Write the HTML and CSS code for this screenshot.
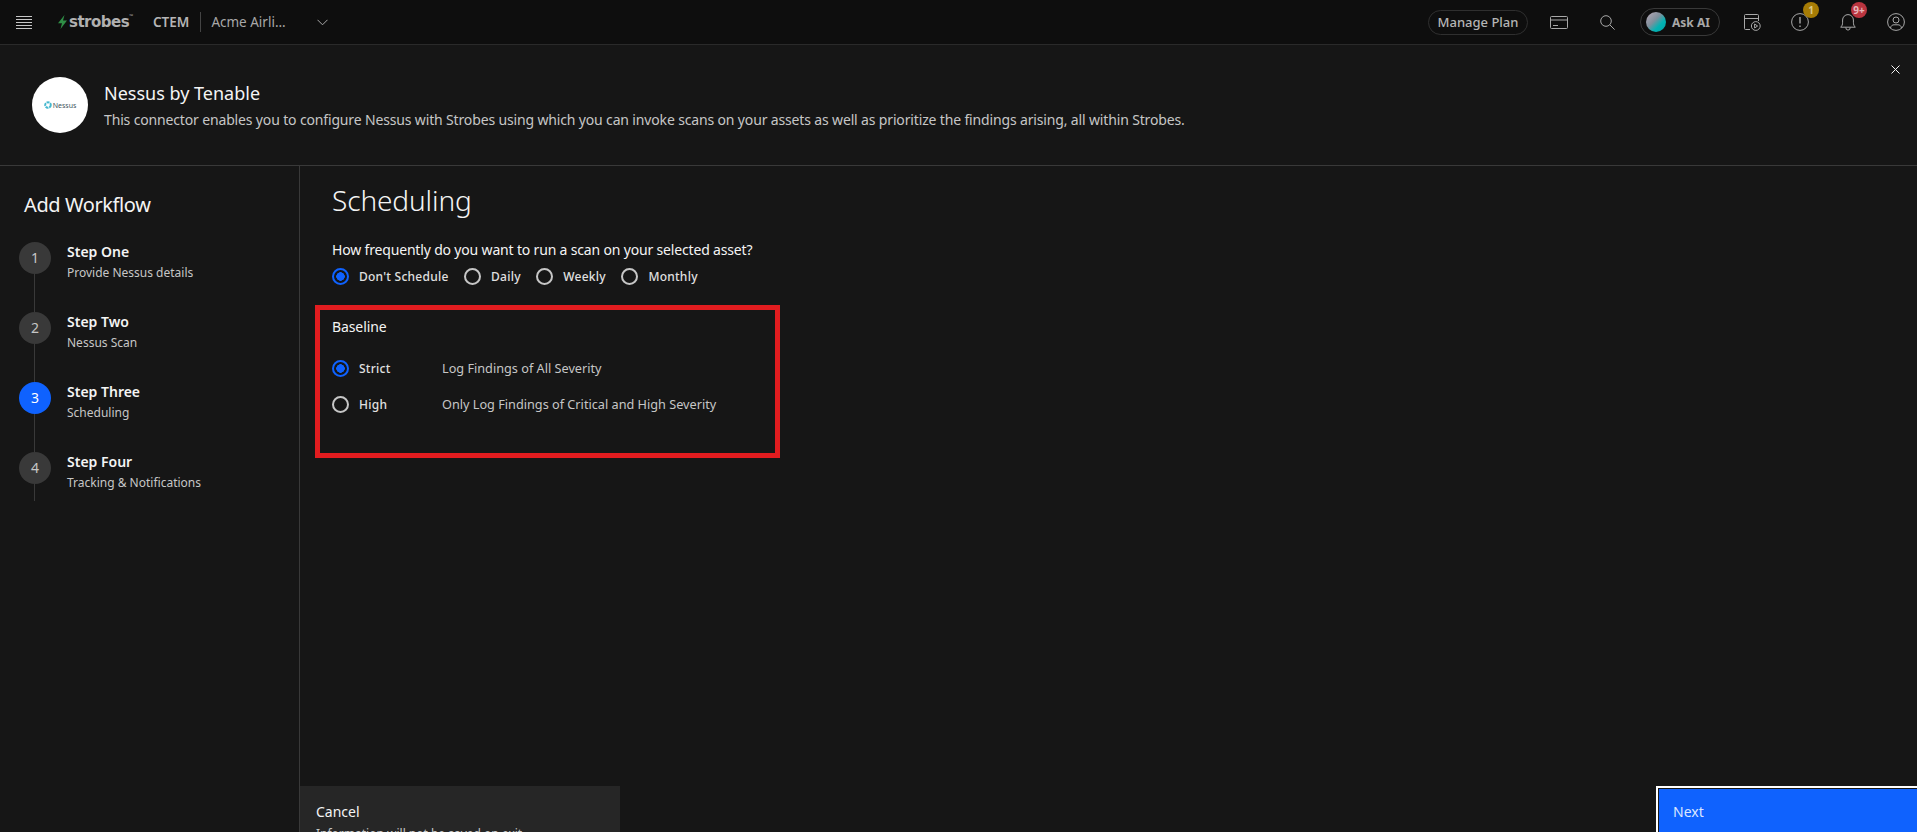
FILE: index.html
```html
<!DOCTYPE html>
<html lang="en">
<head>
  <meta charset="UTF-8" />
  <title>Nessus by Tenable - Add Workflow</title>
  <link rel="stylesheet" href="styles.css">
</head>
<body>

<!-- Top Bar -->
<header class="topbar">
  <svg class="menu-icon" width="16" height="13" viewBox="0 0 16 13" stroke="#c6c6c6" fill="none"><path d="M0 .5h16M0 3.500h16M0 6.500h16M0 9.500h16M0 12.500h16"/></svg>
  <div class="logo">
    <svg width="9" height="14" viewBox="0 0 9 14"><path d="M6.500 0 L5 5.400 L9 5.400 L2.500 14 L4 8.300 L0 8.300 Z" fill="#2f8f46"/></svg>
    <span class="logo-text">strobes</span>
    <span class="logo-tm">™</span>
  </div>
  <span class="product">CTEM</span>
  <span class="org">Acme Airli...</span>
  <svg class="chevron" width="11" height="7" viewBox="0 0 11 7" fill="none" stroke="#a8a8a8"><path d="M.5.8l5 5 5-5"/></svg>

  <div class="topbar-right">
    <span class="plan-btn">Manage Plan</span>
    <svg class="card-icon" width="18" height="13" viewBox="0 0 18 13" fill="none" stroke="#a8a8a8"><rect x=".5" y=".5" width="17" height="12" rx="1"/><path d="M.5 4h17M3 9.500h5"/></svg>
    <svg class="search-icon" width="15" height="15" viewBox="0 0 15 15" fill="none" stroke="#a8a8a8"><circle cx="6" cy="6" r="5.300"/><path d="M9.800 9.800l4.800 4.800"/></svg>
    <span class="ask-btn"><span class="orb"></span>Ask AI</span>
    <svg class="cal-icon" width="17" height="17" viewBox="0 0 17 17" fill="none" stroke="#a8a8a8"><path d="M6 15.500H1.500a1 1 0 0 1-1-1V1.500a1 1 0 0 1 1-1h12a1 1 0 0 1 1 1V7M.5 4.500h14"/><circle cx="11.800" cy="12" r="4.400"/><path d="M10.600 10v4l3-2z"/></svg>
    <span class="icon-wrap alert-wrap">
      <svg width="18" height="18" viewBox="0 0 18 18" fill="none" stroke="#a8a8a8"><circle cx="9" cy="9" r="8.400"/><path d="M9 4v6.500M9 12.600v1.400" stroke-width="1.400"/></svg>
      <span class="badge badge-warn">1</span>
    </span>
    <span class="icon-wrap bell-wrap">
      <svg width="16" height="18" viewBox="0 0 16 18" fill="none" stroke="#a8a8a8"><path d="M.6 14.200c1.500-1.200 2-2.600 2-5V7a5.400 5.400 0 0 1 10.800 0v2.200c0 2.400.5 3.800 2 5zM5.800 14.500a2.200 2.600 0 0 0 4.400 0"/></svg>
      <span class="badge badge-alert">9+</span>
    </span>
    <svg class="user-icon" width="18" height="18" viewBox="0 0 18 18" fill="none" stroke="#a8a8a8"><circle cx="9" cy="9" r="8.400"/><circle cx="9" cy="7" r="3"/><path d="M3.500 15c.5-2.500 2-3.200 3.500-3.200h4c1.500 0 3 .7 3.500 3.200"/></svg>
  </div>
</header>

<!-- Connector Header -->
<section class="connector">
  <div class="connector-logo">
    <svg width="8" height="8" viewBox="0 0 8 8" fill="none"><circle cx="4" cy="4" r="2.800" stroke="#45b8cf" stroke-width="2" stroke-dasharray="3 .8"/></svg>
    <span>Nessus</span>
  </div>
  <div>
    <h1>Nessus by Tenable</h1>
    <p>This connector enables you to configure Nessus with Strobes using which you can invoke scans on your assets as well as prioritize the findings arising, all within Strobes.</p>
  </div>
  <svg class="close-icon" width="9" height="9" viewBox="0 0 9 9" stroke="#f4f4f4" fill="none"><path d="M.5.5l8 8M8.500.5l-8 8"/></svg>
</section>

<div class="workspace">
  <!-- Steps -->
  <aside class="sidebar">
    <h2>Add Workflow</h2>
    <ol class="steps">
      <li class="step"><span class="step-num">1</span><div><h4>Step One</h4><p>Provide Nessus details</p></div></li>
      <li class="step"><span class="step-num">2</span><div><h4>Step Two</h4><p>Nessus Scan</p></div></li>
      <li class="step active"><span class="step-num">3</span><div><h4>Step Three</h4><p>Scheduling</p></div></li>
      <li class="step last"><span class="step-num">4</span><div><h4>Step Four</h4><p>Tracking &amp; Notifications</p></div></li>
    </ol>
  </aside>

  <main class="main">
    <div class="content">
      <h3>Scheduling</h3>
      <p class="question">How frequently do you want to run a scan on your selected asset?</p>
      <div class="radio-row">
        <span class="radio checked"></span><span class="radio-label">Don't Schedule</span>
        <span class="radio"></span><span class="radio-label">Daily</span>
        <span class="radio"></span><span class="radio-label">Weekly</span>
        <span class="radio"></span><span class="radio-label">Monthly</span>
      </div>

      <div class="baseline-box">
        <p class="baseline-title">Baseline</p>
        <div class="baseline-option">
          <span class="radio checked"></span><span class="radio-label option-name">Strict</span>
          <span class="option-desc">Log Findings of All Severity</span>
        </div>
        <div class="baseline-option">
          <span class="radio"></span><span class="radio-label option-name">High</span>
          <span class="option-desc">Only Log Findings of Critical and High Severity</span>
        </div>
      </div>
    </div>

    <div class="footer">
      <div class="btn-cancel">
        <span>Cancel</span>
        <small>Information will not be saved on exit</small>
      </div>
      <div class="btn-next">Next</div>
    </div>
  </main>
</div>

</body>
</html>
```

FILE: styles.css
```css
:root {
  --bg-color: #161616;
  --bar-color: #0e0e0e;
  --line: #393939;
  --text: #f4f4f4;
  --subtext: #c6c6c6;
  --muted: #a8a8a8;
  --primary: #0f62fe;
}

* {
  box-sizing: border-box;
}

html, body {
  height: 100%;
}

body {
  margin: 0;
  display: flex;
  flex-direction: column;
  overflow: hidden;
  font-family: 'Noto Sans', Roboto, sans-serif;
  background-color: var(--bg-color);
  color: var(--text);
}

h1, h2, h3, h4, p, ol {
  margin: 0;
  padding: 0;
  font-weight: 400;
}

/* Top bar */
.topbar {
  display: flex;
  align-items: center;
  flex: none;
  height: 45px;
  padding-left: 16px;
  background: var(--bar-color);
  border-bottom: 1px solid #2a2a2a;
}

.menu-icon {
  margin-right: 26px;
}

.logo {
  display: flex;
  align-items: center;
  width: 95px;
}

.logo-text {
  margin-left: 2px;
  font-family: 'DejaVu Sans', sans-serif;
  font-size: 15px;
  font-weight: 700;
  letter-spacing: -0.5px;
  color: #b0b0b0;
}

.logo-tm {
  align-self: flex-start;
  font-size: 5px;
  color: #a8a8a8;
}

.product {
  padding-right: 11px;
  border-right: 1px solid #444;
  font-size: 13.500px;
  font-weight: 600;
  line-height: 20px;
  color: #b5b5b5;
}

.org {
  width: 106px;
  margin-left: 10px;
  font-size: 13.500px;
  color: #a8a8a8;
}

.topbar-right {
  display: flex;
  align-items: center;
  margin-left: auto;
  padding-right: 12px;
}

.plan-btn {
  width: 100px;
  height: 25px;
  border: 1px solid #2f2f2f;
  border-radius: 13px;
  font-size: 13px;
  font-weight: 500;
  line-height: 23px;
  text-align: center;
  color: #b5b5b5;
}

.card-icon {
  margin-left: 22px;
}

.search-icon {
  margin-left: 32px;
}

.ask-btn {
  display: flex;
  align-items: center;
  gap: 6px;
  width: 80px;
  height: 28px;
  margin-left: 25px;
  padding-left: 5px;
  border: 1px solid #393939;
  border-radius: 14px;
  font-size: 12px;
  font-weight: 700;
  color: #a8a8a8;
}

.orb {
  width: 20px;
  height: 20px;
  border-radius: 50%;
  background: linear-gradient(135deg, #a5a0ad 15%, #7f8f9c 42%, #00b3b3 68%, #0a9ea4);
}

.cal-icon {
  margin-left: 24px;
}

.icon-wrap {
  position: relative;
  display: flex;
}

.alert-wrap {
  margin-left: 30px;
}

.bell-wrap {
  margin-left: 31px;
}

.user-icon {
  margin-left: 31px;
}

.badge {
  position: absolute;
  top: -11px;
  left: 12px;
  width: 16px;
  height: 16px;
  border-radius: 50%;
  font-size: 10px;
  font-weight: 700;
  line-height: 16px;
  text-align: center;
}

.badge-warn {
  background: #a67c05;
  color: #d9c98a;
}

.badge-alert {
  left: 11px;
  background: #b9343f;
  color: #e6b8bc;
}

/* Connector header */
.connector {
  position: relative;
  display: flex;
  align-items: center;
  gap: 16px;
  flex: none;
  height: 121px;
  padding-left: 32px;
  border-bottom: 1px solid var(--line);
}

.connector-logo {
  display: flex;
  align-items: center;
  justify-content: center;
  gap: 1px;
  width: 56px;
  height: 56px;
  border-radius: 50%;
  background: #fff;
  font-size: 7px;
  color: #3f5560;
}

.connector h1 {
  font-size: 18px;
  line-height: 24px;
}

.connector p {
  margin-top: 5px;
  font-size: 14px;
  letter-spacing: -0.15px;
  line-height: 20px;
  color: var(--subtext);
}

.close-icon {
  position: absolute;
  top: 20px;
  right: 17px;
}

/* Body */
.workspace {
  display: flex;
  flex: 1;
  min-height: 0;
}

.sidebar {
  flex: none;
  width: 300px;
  padding: 26px 0 0 19px;
  border-right: 1px solid var(--line);
}

.sidebar h2 {
  margin: 0 0 24px 5px;
  font-size: 20px;
  letter-spacing: -0.4px;
  line-height: 26px;
}

.steps {
  list-style: none;
}

.step {
  display: flex;
  gap: 16px;
  height: 70px;
  background: linear-gradient(#393939, #393939) 15px 0 / 1px 100% no-repeat;
}

.step.last {
  height: 49px;
}

.step-num {
  flex: none;
  width: 32px;
  height: 32px;
  border-radius: 50%;
  background: #393939;
  font-size: 14px;
  line-height: 32px;
  text-align: center;
  color: var(--subtext);
}

.step.active .step-num {
  background: var(--primary);
  color: #fff;
}

.step h4 {
  font-size: 14px;
  font-weight: 600;
  line-height: 20px;
}

.step p {
  margin-top: 2px;
  font-size: 12px;
  line-height: 18px;
  color: var(--subtext);
}

.main {
  display: flex;
  flex: 1;
  flex-direction: column;
  min-width: 0;
}

.content {
  flex: 1;
  padding: 16px 0 0 32px;
}

.content h3 {
  font-size: 28px;
  font-weight: 300;
  letter-spacing: -0.1px;
  line-height: 36px;
}

.question {
  margin-top: 23px;
  font-size: 14px;
  letter-spacing: -0.17px;
  line-height: 18px;
}

.radio-row {
  display: flex;
  align-items: center;
  height: 18px;
  margin-top: 8px;
}

.radio {
  flex: none;
  width: 17px;
  height: 17px;
  margin-right: 10px;
  border: 2px solid var(--subtext);
  border-radius: 50%;
}

.radio.checked {
  border-color: var(--primary);
  background: radial-gradient(circle, var(--primary) 0 4px, transparent 4.500px);
}

.radio-label {
  margin-right: 15.500px;
  font-size: 12px;
  font-weight: 500;
  letter-spacing: 0.25px;
  color: #e0e0e0;
}

.baseline-box {
  width: 465px;
  height: 153px;
  margin: 20px 0 0 -17px;
  padding: 8px 0 0 12px;
  border: 5px solid #e21c1f;
}

.baseline-title {
  margin-bottom: 23px;
  font-size: 14px;
  letter-spacing: -0.1px;
  line-height: 18px;
}

.baseline-option {
  display: flex;
  align-items: center;
  height: 18px;
  margin-bottom: 18px;
}

.option-name {
  width: 83px;
  margin-right: 0;
}

.option-desc {
  font-size: 12.700px;
  color: var(--subtext);
}

/* Footer buttons */
.footer {
  display: flex;
  justify-content: space-between;
  flex: none;
  height: 46px;
  overflow: hidden;
}

.btn-cancel {
  width: 320px;
  height: 64px;
  padding: 14px 16px;
  background: #262626;
  font-size: 14px;
  line-height: 24px;
}

.btn-cancel small {
  display: block;
  font-size: 12px;
  line-height: 20px;
  color: var(--subtext);
}

.btn-next {
  width: 265px;
  height: 64px;
  margin-right: -4px;
  padding: 12px 15px;
  flex: none;
  background: var(--primary);
  border: 2px solid #fff;
  box-shadow: inset 0 0 0 1px #161616;
  font-size: 14px;
  line-height: 24px;
  color: #dbe6ff;
}
```
